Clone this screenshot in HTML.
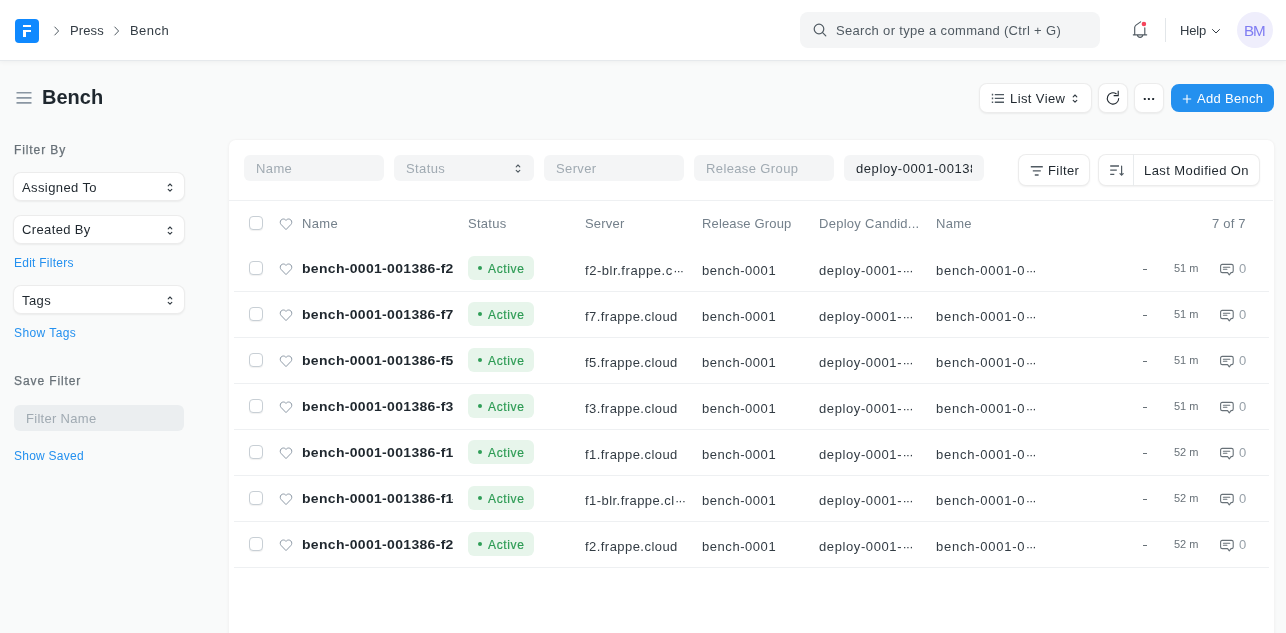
<!DOCTYPE html><html><head><meta charset="utf-8"><style>
*{box-sizing:border-box;margin:0;padding:0}
html,body{width:1286px;height:633px;overflow:hidden}
body{background:#F9FAFA;font-family:"Liberation Sans",sans-serif;color:#1F272E;position:relative;font-size:13px}
.a{position:absolute}
.t{position:absolute;white-space:nowrap;line-height:16px;will-change:transform}
#nav{position:absolute;left:0;top:0;width:1286px;height:61px;background:#fff;border-bottom:1px solid #E6E9EC;box-shadow:0 1px 5px rgba(0,0,0,0.05)}
.logo{left:15px;top:19px;width:24px;height:24px;border-radius:4px;background:#0F89FF}
.crumb{color:#333C44;font-size:13px}
.search{left:800px;top:12px;width:300px;height:36px;border-radius:8px;background:#F4F5F6}
.btn{position:absolute;background:#fff;border-radius:8px;box-shadow:inset 0 0 0 1px rgba(0,0,0,0.075),0 1px 2px rgba(0,0,0,0.06)}
.link{color:#2490EF;font-size:12px;letter-spacing:0.25px}
.lbl{color:#687178;font-size:12px;-webkit-text-stroke:0.25px #687178}
#card{position:absolute;left:228px;top:139px;width:1047px;height:520px;background:#fff;border-radius:8px;box-shadow:inset 0 0 0 1px rgba(0,0,0,0.045),0 1px 3px rgba(0,0,0,0.035)}
.inp{position:absolute;top:155px;width:140px;height:26px;border-radius:6px;background:#F4F5F6}
.ph{color:#A0AAB2;font-size:13px}
.hd{color:#74808B;font-size:13px}
.cb{position:absolute;width:14px;height:14px;border-radius:4px;border:1px solid #C8CFD5;background:#fff;box-shadow:0 1px 1px rgba(0,0,0,0.06)}
.rdiv{position:absolute;left:234px;width:1035px;height:1px;background:#EEF0F2}
.nm{color:#1F272E;font-weight:700;font-size:13px;letter-spacing:0.3px;transform:scaleX(1.075);transform-origin:0 0}
.pill{position:absolute;width:66px;height:24px;border-radius:6px;background:#E7F5EB}
.pill .dot{position:absolute;left:10px;top:10px;width:4px;height:4px;border-radius:50%;background:#2F9E57}
.pill span{position:absolute;left:20px;top:5px;color:#2D9B54;font-size:12px;line-height:16px;letter-spacing:0.65px;-webkit-text-stroke:0.2px #2D9B54;will-change:transform}
.val{color:#333C44;font-size:13px}
.tm{color:#687178;font-size:11px}
.dd{letter-spacing:-1.05px;margin-left:0.5px}
</style></head><body>
<div id="nav">
<div class="a logo"><div class="a" style="left:8px;top:6px;width:8.3px;height:2px;background:#fff"></div><div class="a" style="left:8px;top:11.2px;width:8.2px;height:2.1px;background:#fff"></div><div class="a" style="left:8px;top:11.2px;width:3.1px;height:6.7px;background:#fff"></div></div>
<svg class="a" style="left:53px;top:26px" width="8" height="10" viewBox="0 0 8 10"><path d="M1.8 1 L5.6 5 L1.8 9" fill="none" stroke="#505A62" stroke-width="1" stroke-linecap="round" stroke-linejoin="round"/></svg>
<div class="t crumb" style="left:70px;top:23px;letter-spacing:0.12px">Press</div>
<svg class="a" style="left:113px;top:26px" width="8" height="10" viewBox="0 0 8 10"><path d="M1.8 1 L5.6 5 L1.8 9" fill="none" stroke="#505A62" stroke-width="1" stroke-linecap="round" stroke-linejoin="round"/></svg>
<div class="t crumb" style="left:130px;top:23px;letter-spacing:0.45px">Bench</div>
<div class="a search"><svg class="a" style="left:13px;top:11px" width="14" height="14" viewBox="0 0 14 14"><circle cx="6" cy="6" r="4.8" fill="none" stroke="#505A62" stroke-width="1.2"/><path d="M9.6 9.6 L12.8 12.8" stroke="#505A62" stroke-width="1.2" stroke-linecap="round"/></svg></div>
<div class="t " style="left:836px;top:23px;color:#505A62;letter-spacing:0.33px">Search or type a command (Ctrl + G)</div>
<svg class="a" style="left:1131px;top:20px" width="18" height="19" viewBox="0 0 18 19"><path d="M3.7 14.8 V7.4 Q3.9 6 5 5.1 L9.6 1.9 M13.8 7.8 V14.8 M2.3 14.8 H15.7 M6.4 15 Q6.6 17.3 9.1 17.3 Q11.6 17.3 11.8 15" fill="none" stroke="#505A62" stroke-width="1.15" stroke-linecap="round" stroke-linejoin="round"/><circle cx="12.9" cy="4" r="2.3" fill="#F5455C"/></svg>
<div class="a" style="left:1165px;top:18px;width:1px;height:24px;background:#E2E6E9"></div>
<div class="t " style="left:1180px;top:23px;color:#333C44;letter-spacing:-0.2px">Help</div>
<svg class="a" style="left:1211px;top:28px" width="10" height="7" viewBox="0 0 10 7"><path d="M1.5 1.5 L5 5 L8.5 1.5" fill="none" stroke="#333C44" stroke-width="1" stroke-linecap="round" stroke-linejoin="round"/></svg>
<div class="a" style="left:1237px;top:12px;width:36px;height:36px;border-radius:50%;background:#EFEEFC"></div>
<div class="t" style="left:1243.8px;top:22.6px;color:#7F7CF2;font-size:15.2px;letter-spacing:-1.15px">BM</div>
</div>
<svg class="a" style="left:16px;top:91px" width="16" height="14" viewBox="0 0 16 14"><path d="M0.5 1.7 H15.5 M0.5 6.9 H15.5 M0.5 11.9 H15.5" stroke="#8A96A2" stroke-width="1.6"/></svg>
<div class="t" style="left:42px;top:85px;font-size:20px;font-weight:700;line-height:24px;color:#1F272E">Bench</div>
<div class="btn" style="left:979px;top:83px;width:113px;height:30px"></div>
<svg class="a" style="left:991px;top:93px" width="14" height="12" viewBox="0 0 14 12"><path d="M1.5 0.8 V2.4 M1.5 4.6 V6.2 M1.5 8.4 V10 M3.8 1.6 H13 M3.8 5.4 H13 M3.8 9.2 H13" stroke="#505A62" stroke-width="1.4"/></svg>
<div class="t " style="left:1010px;top:91px;color:#1F272E;letter-spacing:0.4px">List View</div>
<svg class="a" style="left:1071px;top:92px" width="8" height="12" viewBox="0 0 8 12"><path d="M2.2 4.8 L4 3 L5.8 4.8 M2.2 8.4 L4 10.2 L5.8 8.4" fill="none" stroke="#333C44" stroke-width="1.15" stroke-linecap="round" stroke-linejoin="round"/></svg>
<div class="btn" style="left:1098px;top:83px;width:30px;height:30px"></div>
<svg class="a" style="left:1104px;top:89px" width="18" height="18" viewBox="0 0 18 18"><path d="M14.7 9.6 A5.7 5.7 0 1 1 12.2 4.7" fill="none" stroke="#1F272E" stroke-width="1.1" stroke-linecap="round"/><path d="M14.2 2.4 V6.6 H10.2" fill="none" stroke="#1F272E" stroke-width="1.1" stroke-linecap="square" stroke-linejoin="miter"/></svg>
<div class="btn" style="left:1134px;top:83px;width:30px;height:30px"></div>
<svg class="a" style="left:1142px;top:97px" width="14" height="4" viewBox="0 0 14 4"><rect x="1.8" y="1" width="2" height="2" rx="0.4" fill="#1F272E"/><rect x="5.9" y="1" width="2" height="2" rx="0.4" fill="#1F272E"/><rect x="10.1" y="1" width="2" height="2" rx="0.4" fill="#1F272E"/></svg>
<div class="a" style="left:1171px;top:84px;width:103px;height:28px;border-radius:8px;background:#2490EF"></div>
<svg class="a" style="left:1182px;top:94px" width="10" height="10" viewBox="0 0 10 10"><path d="M5 0.8 V9.2 M0.8 5 H9.2" stroke="#fff" stroke-width="1.1"/></svg>
<div class="t " style="left:1197px;top:91px;color:#fff;letter-spacing:0.3px">Add Bench</div>
<div class="t lbl" style="left:14px;top:142px;letter-spacing:0.9px">Filter By</div>
<div class="btn" style="left:13px;top:172px;width:172px;height:29px"></div><div class="t " style="left:22px;top:180px;color:#1F272E;letter-spacing:0.4px">Assigned To</div><svg class="a" style="left:166px;top:181px" width="8" height="12" viewBox="0 0 8 12"><path d="M2.2 4.8 L4 3 L5.8 4.8 M2.2 8.4 L4 10.2 L5.8 8.4" fill="none" stroke="#333C44" stroke-width="1.15" stroke-linecap="round" stroke-linejoin="round"/></svg>
<div class="btn" style="left:13px;top:215px;width:172px;height:29px"></div><div class="t " style="left:22px;top:222px;color:#1F272E;letter-spacing:0.37px">Created By</div><svg class="a" style="left:166px;top:224px" width="8" height="12" viewBox="0 0 8 12"><path d="M2.2 4.8 L4 3 L5.8 4.8 M2.2 8.4 L4 10.2 L5.8 8.4" fill="none" stroke="#333C44" stroke-width="1.15" stroke-linecap="round" stroke-linejoin="round"/></svg>
<div class="t link" style="left:14px;top:255px;">Edit Filters</div>
<div class="btn" style="left:13px;top:285px;width:172px;height:29px"></div><div class="t " style="left:22px;top:293px;color:#1F272E;letter-spacing:0.4px">Tags</div><svg class="a" style="left:166px;top:294px" width="8" height="12" viewBox="0 0 8 12"><path d="M2.2 4.8 L4 3 L5.8 4.8 M2.2 8.4 L4 10.2 L5.8 8.4" fill="none" stroke="#333C44" stroke-width="1.15" stroke-linecap="round" stroke-linejoin="round"/></svg>
<div class="t link" style="left:14px;top:325px;letter-spacing:0.42px">Show Tags</div>
<div class="t lbl" style="left:14px;top:373px;letter-spacing:0.9px">Save Filter</div>
<div class="a" style="left:14px;top:405px;width:170px;height:26px;border-radius:6px;background:#EBEEF0"></div>
<div class="t " style="left:26px;top:411px;color:#A0AAB2;letter-spacing:0.3px">Filter Name</div>
<div class="t link" style="left:14px;top:448px;">Show Saved</div>
<div id="card"></div>
<div class="inp" style="left:244px"></div>
<div class="t ph" style="left:256px;top:161px;letter-spacing:0.38px">Name</div>
<div class="inp" style="left:394px"></div>
<div class="t ph" style="left:406px;top:161px;letter-spacing:0.38px">Status</div>
<div class="inp" style="left:544px"></div>
<div class="t ph" style="left:556px;top:161px;letter-spacing:0.38px">Server</div>
<div class="inp" style="left:694px"></div>
<div class="t ph" style="left:706px;top:161px;letter-spacing:0.38px">Release Group</div>
<div class="inp" style="left:844px"></div>
<svg class="a" style="left:514px;top:162px" width="8" height="12" viewBox="0 0 8 12"><path d="M2.2 4.8 L4 3 L5.8 4.8 M2.2 8.4 L4 10.2 L5.8 8.4" fill="none" stroke="#505A62" stroke-width="1.15" stroke-linecap="round" stroke-linejoin="round"/></svg>
<div class="a" style="left:856px;top:160px;width:116px;height:18px;overflow:hidden"><div class="t " style="left:0px;top:1px;color:#1F272E;letter-spacing:0.58px">deploy-0001-001386</div></div>
<div class="btn" style="left:1018px;top:154px;width:72px;height:32px"></div>
<svg class="a" style="left:1030px;top:165px" width="13" height="12" viewBox="0 0 13 12"><path d="M0.8 1.8 H12.8 M2.8 5.9 H10.8 M4.8 10 H8.6" stroke="#505A62" stroke-width="1.4"/></svg>
<div class="t " style="left:1048px;top:163px;color:#1F272E;letter-spacing:0.4px">Filter</div>
<div class="btn" style="left:1098px;top:154px;width:162px;height:32px"></div>
<div class="a" style="left:1133px;top:154px;width:1px;height:32px;background:#E8EBED"></div>
<svg class="a" style="left:1110px;top:164px" width="16" height="13" viewBox="0 0 16 13"><path d="M0.2 2 H9 M0.2 6.2 H6.8 M0.2 10.3 H4.3" stroke="#505A62" stroke-width="1.3"/><path d="M11.6 2.2 V11.2 M10 9.6 L11.6 11.2 L13.2 9.6" fill="none" stroke="#505A62" stroke-width="1.2" stroke-linecap="round" stroke-linejoin="round"/></svg>
<div class="t " style="left:1144px;top:163px;color:#1F272E;letter-spacing:0.42px">Last Modified On</div>
<div class="a" style="left:229px;top:200px;width:1044px;height:1px;background:#EEF0F2"></div>
<div class="cb" style="left:249px;top:216px"></div>
<svg class="a" style="left:279px;top:216.7px" width="14" height="14" viewBox="0 0 14 14"><path d="M7 12.6 L2.2 7.6 C0.9 6.3 0.9 4.2 2.2 2.9 C3.4 1.7 5.4 1.7 6.6 2.9 L7 3.3 L7.4 2.9 C8.6 1.7 10.6 1.7 11.8 2.9 C13.1 4.2 13.1 6.3 11.8 7.6 Z" fill="none" stroke="#8D99A6" stroke-width="1" stroke-linejoin="round"/></svg>
<div class="t hd" style="left:302px;top:216px;letter-spacing:0.35px">Name</div>
<div class="t hd" style="left:468px;top:216px;letter-spacing:0.27px">Status</div>
<div class="t hd" style="left:585px;top:216px;letter-spacing:0.2px">Server</div>
<div class="t hd" style="left:702px;top:216px;letter-spacing:0.15px">Release Group</div>
<div class="t hd" style="left:819px;top:216px;letter-spacing:0.27px">Deploy Candid...</div>
<div class="t hd" style="left:936px;top:216px;letter-spacing:0.3px">Name</div>
<div class="t hd" style="left:1212px;top:216px;letter-spacing:0.2px">7 of 7</div>
<div class="cb" style="left:249px;top:261px"></div>
<svg class="a" style="left:279px;top:261.7px" width="14" height="14" viewBox="0 0 14 14"><path d="M7 12.6 L2.2 7.6 C0.9 6.3 0.9 4.2 2.2 2.9 C3.4 1.7 5.4 1.7 6.6 2.9 L7 3.3 L7.4 2.9 C8.6 1.7 10.6 1.7 11.8 2.9 C13.1 4.2 13.1 6.3 11.8 7.6 Z" fill="none" stroke="#8D99A6" stroke-width="1" stroke-linejoin="round"/></svg>
<div class="a" style="left:302px;top:259px;width:152px;height:18px;overflow:hidden"><div class="t nm" style="left:0px;top:2px;">bench-0001-001386-f2</div></div>
<div class="pill" style="left:468px;top:256px"><div class="dot"></div><span>Active</span></div>
<div class="t val" style="left:585px;top:263px;letter-spacing:0.55px">f2-blr.frappe.c<span class="dd">···</span></div>
<div class="t val" style="left:702px;top:263px;letter-spacing:0.55px">bench-0001</div>
<div class="t val" style="left:819px;top:263px;letter-spacing:0.6px">deploy-0001-<span class="dd">···</span></div>
<div class="t val" style="left:936px;top:263px;letter-spacing:0.75px">bench-0001-0<span class="dd">···</span></div>
<div class="a" style="left:1143px;top:269px;width:4px;height:1px;background:#687178"></div>
<div class="t tm" style="left:1174px;top:260px;">51 m</div>
<svg class="a" style="left:1219px;top:263px" width="16" height="14" viewBox="0 0 16 14"><path d="M3.3 1.4 H12.5 Q14.2 1.4 14.2 3.1 V7.9 Q14.2 9.6 12.5 9.6 H12 L10.3 11.9 L8.6 9.6 H3.3 Q1.6 9.6 1.6 7.9 V3.1 Q1.6 1.4 3.3 1.4 Z" fill="none" stroke="#687178" stroke-width="1.1" stroke-linejoin="round"/><path d="M4.4 4.2 H10.8 M4.4 6.2 H7.9" stroke="#687178" stroke-width="1.1" stroke-linecap="round"/></svg>
<div class="t tm" style="left:1239px;top:261px;font-size:13px;color:#98A1A9">0</div>
<div class="rdiv" style="top:291px"></div>
<div class="cb" style="left:249px;top:307px"></div>
<svg class="a" style="left:279px;top:307.7px" width="14" height="14" viewBox="0 0 14 14"><path d="M7 12.6 L2.2 7.6 C0.9 6.3 0.9 4.2 2.2 2.9 C3.4 1.7 5.4 1.7 6.6 2.9 L7 3.3 L7.4 2.9 C8.6 1.7 10.6 1.7 11.8 2.9 C13.1 4.2 13.1 6.3 11.8 7.6 Z" fill="none" stroke="#8D99A6" stroke-width="1" stroke-linejoin="round"/></svg>
<div class="a" style="left:302px;top:305px;width:152px;height:18px;overflow:hidden"><div class="t nm" style="left:0px;top:2px;">bench-0001-001386-f7</div></div>
<div class="pill" style="left:468px;top:302px"><div class="dot"></div><span>Active</span></div>
<div class="t val" style="left:585px;top:309px;letter-spacing:0.45px">f7.frappe.cloud</div>
<div class="t val" style="left:702px;top:309px;letter-spacing:0.55px">bench-0001</div>
<div class="t val" style="left:819px;top:309px;letter-spacing:0.6px">deploy-0001-<span class="dd">···</span></div>
<div class="t val" style="left:936px;top:309px;letter-spacing:0.75px">bench-0001-0<span class="dd">···</span></div>
<div class="a" style="left:1143px;top:315px;width:4px;height:1px;background:#687178"></div>
<div class="t tm" style="left:1174px;top:306px;">51 m</div>
<svg class="a" style="left:1219px;top:309px" width="16" height="14" viewBox="0 0 16 14"><path d="M3.3 1.4 H12.5 Q14.2 1.4 14.2 3.1 V7.9 Q14.2 9.6 12.5 9.6 H12 L10.3 11.9 L8.6 9.6 H3.3 Q1.6 9.6 1.6 7.9 V3.1 Q1.6 1.4 3.3 1.4 Z" fill="none" stroke="#687178" stroke-width="1.1" stroke-linejoin="round"/><path d="M4.4 4.2 H10.8 M4.4 6.2 H7.9" stroke="#687178" stroke-width="1.1" stroke-linecap="round"/></svg>
<div class="t tm" style="left:1239px;top:307px;font-size:13px;color:#98A1A9">0</div>
<div class="rdiv" style="top:337px"></div>
<div class="cb" style="left:249px;top:353px"></div>
<svg class="a" style="left:279px;top:353.7px" width="14" height="14" viewBox="0 0 14 14"><path d="M7 12.6 L2.2 7.6 C0.9 6.3 0.9 4.2 2.2 2.9 C3.4 1.7 5.4 1.7 6.6 2.9 L7 3.3 L7.4 2.9 C8.6 1.7 10.6 1.7 11.8 2.9 C13.1 4.2 13.1 6.3 11.8 7.6 Z" fill="none" stroke="#8D99A6" stroke-width="1" stroke-linejoin="round"/></svg>
<div class="a" style="left:302px;top:351px;width:152px;height:18px;overflow:hidden"><div class="t nm" style="left:0px;top:2px;">bench-0001-001386-f5</div></div>
<div class="pill" style="left:468px;top:348px"><div class="dot"></div><span>Active</span></div>
<div class="t val" style="left:585px;top:355px;letter-spacing:0.45px">f5.frappe.cloud</div>
<div class="t val" style="left:702px;top:355px;letter-spacing:0.55px">bench-0001</div>
<div class="t val" style="left:819px;top:355px;letter-spacing:0.6px">deploy-0001-<span class="dd">···</span></div>
<div class="t val" style="left:936px;top:355px;letter-spacing:0.75px">bench-0001-0<span class="dd">···</span></div>
<div class="a" style="left:1143px;top:361px;width:4px;height:1px;background:#687178"></div>
<div class="t tm" style="left:1174px;top:352px;">51 m</div>
<svg class="a" style="left:1219px;top:355px" width="16" height="14" viewBox="0 0 16 14"><path d="M3.3 1.4 H12.5 Q14.2 1.4 14.2 3.1 V7.9 Q14.2 9.6 12.5 9.6 H12 L10.3 11.9 L8.6 9.6 H3.3 Q1.6 9.6 1.6 7.9 V3.1 Q1.6 1.4 3.3 1.4 Z" fill="none" stroke="#687178" stroke-width="1.1" stroke-linejoin="round"/><path d="M4.4 4.2 H10.8 M4.4 6.2 H7.9" stroke="#687178" stroke-width="1.1" stroke-linecap="round"/></svg>
<div class="t tm" style="left:1239px;top:353px;font-size:13px;color:#98A1A9">0</div>
<div class="rdiv" style="top:383px"></div>
<div class="cb" style="left:249px;top:399px"></div>
<svg class="a" style="left:279px;top:399.7px" width="14" height="14" viewBox="0 0 14 14"><path d="M7 12.6 L2.2 7.6 C0.9 6.3 0.9 4.2 2.2 2.9 C3.4 1.7 5.4 1.7 6.6 2.9 L7 3.3 L7.4 2.9 C8.6 1.7 10.6 1.7 11.8 2.9 C13.1 4.2 13.1 6.3 11.8 7.6 Z" fill="none" stroke="#8D99A6" stroke-width="1" stroke-linejoin="round"/></svg>
<div class="a" style="left:302px;top:397px;width:152px;height:18px;overflow:hidden"><div class="t nm" style="left:0px;top:2px;">bench-0001-001386-f3</div></div>
<div class="pill" style="left:468px;top:394px"><div class="dot"></div><span>Active</span></div>
<div class="t val" style="left:585px;top:401px;letter-spacing:0.45px">f3.frappe.cloud</div>
<div class="t val" style="left:702px;top:401px;letter-spacing:0.55px">bench-0001</div>
<div class="t val" style="left:819px;top:401px;letter-spacing:0.6px">deploy-0001-<span class="dd">···</span></div>
<div class="t val" style="left:936px;top:401px;letter-spacing:0.75px">bench-0001-0<span class="dd">···</span></div>
<div class="a" style="left:1143px;top:407px;width:4px;height:1px;background:#687178"></div>
<div class="t tm" style="left:1174px;top:398px;">51 m</div>
<svg class="a" style="left:1219px;top:401px" width="16" height="14" viewBox="0 0 16 14"><path d="M3.3 1.4 H12.5 Q14.2 1.4 14.2 3.1 V7.9 Q14.2 9.6 12.5 9.6 H12 L10.3 11.9 L8.6 9.6 H3.3 Q1.6 9.6 1.6 7.9 V3.1 Q1.6 1.4 3.3 1.4 Z" fill="none" stroke="#687178" stroke-width="1.1" stroke-linejoin="round"/><path d="M4.4 4.2 H10.8 M4.4 6.2 H7.9" stroke="#687178" stroke-width="1.1" stroke-linecap="round"/></svg>
<div class="t tm" style="left:1239px;top:399px;font-size:13px;color:#98A1A9">0</div>
<div class="rdiv" style="top:429px"></div>
<div class="cb" style="left:249px;top:445px"></div>
<svg class="a" style="left:279px;top:445.7px" width="14" height="14" viewBox="0 0 14 14"><path d="M7 12.6 L2.2 7.6 C0.9 6.3 0.9 4.2 2.2 2.9 C3.4 1.7 5.4 1.7 6.6 2.9 L7 3.3 L7.4 2.9 C8.6 1.7 10.6 1.7 11.8 2.9 C13.1 4.2 13.1 6.3 11.8 7.6 Z" fill="none" stroke="#8D99A6" stroke-width="1" stroke-linejoin="round"/></svg>
<div class="a" style="left:302px;top:443px;width:152px;height:18px;overflow:hidden"><div class="t nm" style="left:0px;top:2px;">bench-0001-001386-f1</div></div>
<div class="pill" style="left:468px;top:440px"><div class="dot"></div><span>Active</span></div>
<div class="t val" style="left:585px;top:447px;letter-spacing:0.45px">f1.frappe.cloud</div>
<div class="t val" style="left:702px;top:447px;letter-spacing:0.55px">bench-0001</div>
<div class="t val" style="left:819px;top:447px;letter-spacing:0.6px">deploy-0001-<span class="dd">···</span></div>
<div class="t val" style="left:936px;top:447px;letter-spacing:0.75px">bench-0001-0<span class="dd">···</span></div>
<div class="a" style="left:1143px;top:453px;width:4px;height:1px;background:#687178"></div>
<div class="t tm" style="left:1174px;top:444px;">52 m</div>
<svg class="a" style="left:1219px;top:447px" width="16" height="14" viewBox="0 0 16 14"><path d="M3.3 1.4 H12.5 Q14.2 1.4 14.2 3.1 V7.9 Q14.2 9.6 12.5 9.6 H12 L10.3 11.9 L8.6 9.6 H3.3 Q1.6 9.6 1.6 7.9 V3.1 Q1.6 1.4 3.3 1.4 Z" fill="none" stroke="#687178" stroke-width="1.1" stroke-linejoin="round"/><path d="M4.4 4.2 H10.8 M4.4 6.2 H7.9" stroke="#687178" stroke-width="1.1" stroke-linecap="round"/></svg>
<div class="t tm" style="left:1239px;top:445px;font-size:13px;color:#98A1A9">0</div>
<div class="rdiv" style="top:475px"></div>
<div class="cb" style="left:249px;top:491px"></div>
<svg class="a" style="left:279px;top:491.7px" width="14" height="14" viewBox="0 0 14 14"><path d="M7 12.6 L2.2 7.6 C0.9 6.3 0.9 4.2 2.2 2.9 C3.4 1.7 5.4 1.7 6.6 2.9 L7 3.3 L7.4 2.9 C8.6 1.7 10.6 1.7 11.8 2.9 C13.1 4.2 13.1 6.3 11.8 7.6 Z" fill="none" stroke="#8D99A6" stroke-width="1" stroke-linejoin="round"/></svg>
<div class="a" style="left:302px;top:489px;width:152px;height:18px;overflow:hidden"><div class="t nm" style="left:0px;top:2px;">bench-0001-001386-f1</div></div>
<div class="pill" style="left:468px;top:486px"><div class="dot"></div><span>Active</span></div>
<div class="t val" style="left:585px;top:493px;letter-spacing:0.45px">f1-blr.frappe.cl<span class="dd">···</span></div>
<div class="t val" style="left:702px;top:493px;letter-spacing:0.55px">bench-0001</div>
<div class="t val" style="left:819px;top:493px;letter-spacing:0.6px">deploy-0001-<span class="dd">···</span></div>
<div class="t val" style="left:936px;top:493px;letter-spacing:0.75px">bench-0001-0<span class="dd">···</span></div>
<div class="a" style="left:1143px;top:499px;width:4px;height:1px;background:#687178"></div>
<div class="t tm" style="left:1174px;top:490px;">52 m</div>
<svg class="a" style="left:1219px;top:493px" width="16" height="14" viewBox="0 0 16 14"><path d="M3.3 1.4 H12.5 Q14.2 1.4 14.2 3.1 V7.9 Q14.2 9.6 12.5 9.6 H12 L10.3 11.9 L8.6 9.6 H3.3 Q1.6 9.6 1.6 7.9 V3.1 Q1.6 1.4 3.3 1.4 Z" fill="none" stroke="#687178" stroke-width="1.1" stroke-linejoin="round"/><path d="M4.4 4.2 H10.8 M4.4 6.2 H7.9" stroke="#687178" stroke-width="1.1" stroke-linecap="round"/></svg>
<div class="t tm" style="left:1239px;top:491px;font-size:13px;color:#98A1A9">0</div>
<div class="a" style="left:452px;top:499px;width:1px;height:1px;background:#9AA3AB"></div>
<div class="rdiv" style="top:521px"></div>
<div class="cb" style="left:249px;top:537px"></div>
<svg class="a" style="left:279px;top:537.7px" width="14" height="14" viewBox="0 0 14 14"><path d="M7 12.6 L2.2 7.6 C0.9 6.3 0.9 4.2 2.2 2.9 C3.4 1.7 5.4 1.7 6.6 2.9 L7 3.3 L7.4 2.9 C8.6 1.7 10.6 1.7 11.8 2.9 C13.1 4.2 13.1 6.3 11.8 7.6 Z" fill="none" stroke="#8D99A6" stroke-width="1" stroke-linejoin="round"/></svg>
<div class="a" style="left:302px;top:535px;width:152px;height:18px;overflow:hidden"><div class="t nm" style="left:0px;top:2px;">bench-0001-001386-f2</div></div>
<div class="pill" style="left:468px;top:532px"><div class="dot"></div><span>Active</span></div>
<div class="t val" style="left:585px;top:539px;letter-spacing:0.45px">f2.frappe.cloud</div>
<div class="t val" style="left:702px;top:539px;letter-spacing:0.55px">bench-0001</div>
<div class="t val" style="left:819px;top:539px;letter-spacing:0.6px">deploy-0001-<span class="dd">···</span></div>
<div class="t val" style="left:936px;top:539px;letter-spacing:0.75px">bench-0001-0<span class="dd">···</span></div>
<div class="a" style="left:1143px;top:545px;width:4px;height:1px;background:#687178"></div>
<div class="t tm" style="left:1174px;top:536px;">52 m</div>
<svg class="a" style="left:1219px;top:539px" width="16" height="14" viewBox="0 0 16 14"><path d="M3.3 1.4 H12.5 Q14.2 1.4 14.2 3.1 V7.9 Q14.2 9.6 12.5 9.6 H12 L10.3 11.9 L8.6 9.6 H3.3 Q1.6 9.6 1.6 7.9 V3.1 Q1.6 1.4 3.3 1.4 Z" fill="none" stroke="#687178" stroke-width="1.1" stroke-linejoin="round"/><path d="M4.4 4.2 H10.8 M4.4 6.2 H7.9" stroke="#687178" stroke-width="1.1" stroke-linecap="round"/></svg>
<div class="t tm" style="left:1239px;top:537px;font-size:13px;color:#98A1A9">0</div>
<div class="rdiv" style="top:567px"></div>
</body></html>
